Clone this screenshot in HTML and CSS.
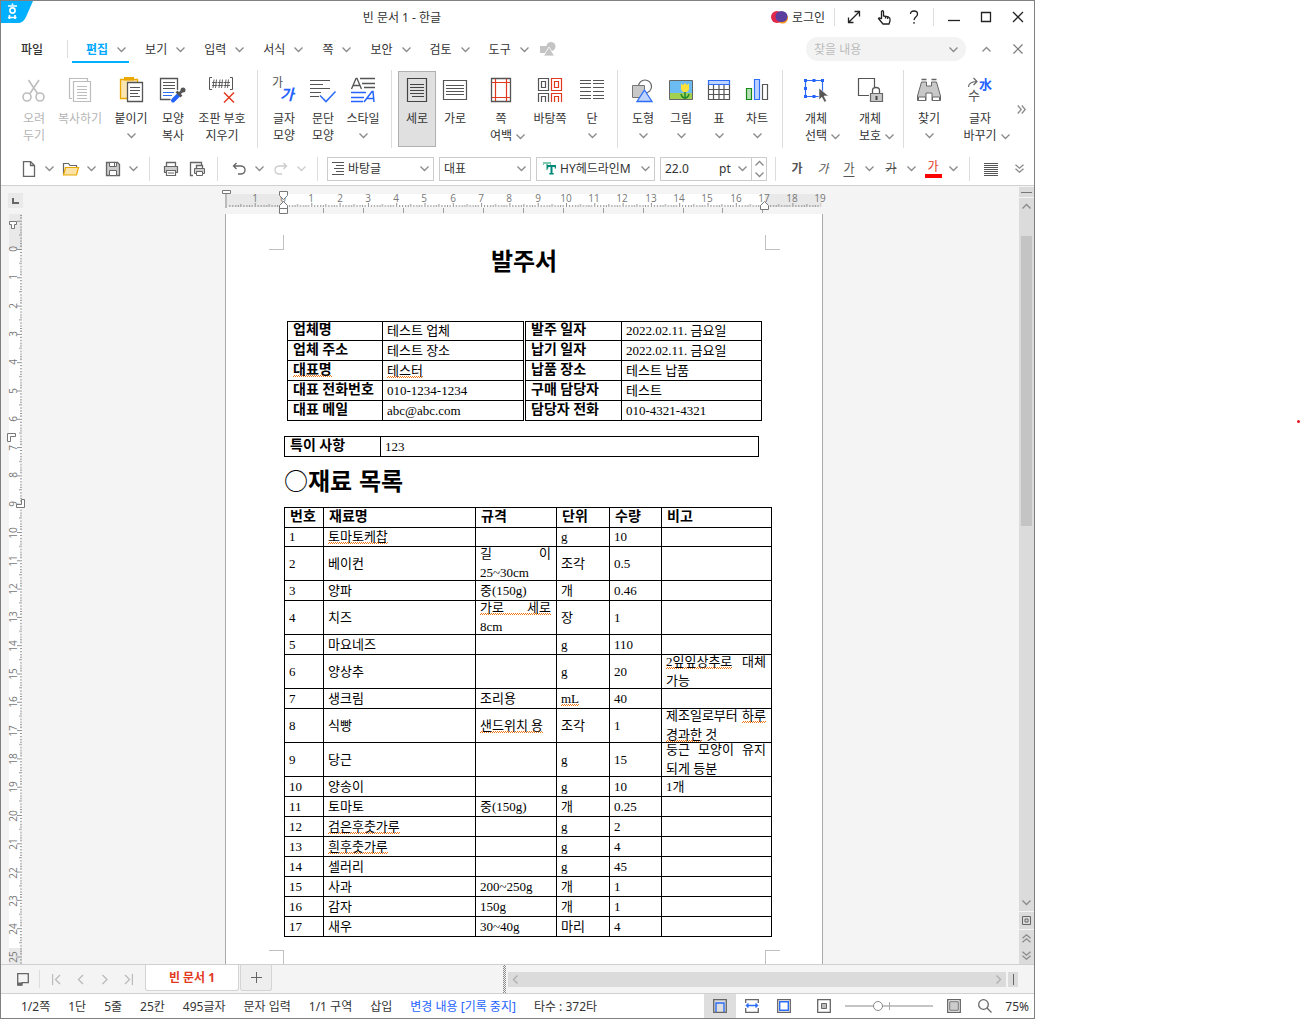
FILE: index.html
```html
<!DOCTYPE html>
<html lang="ko">
<head>
<meta charset="utf-8">
<title>빈 문서 1 - 한글</title>
<link rel="stylesheet" href="styles.css">
</head>
<body>
<svg class="defs" aria-hidden="true">
  <symbol id="chev" viewBox="0 0 9 9"><path d="M.5 2.5l4 4 4-4" fill="none" stroke="currentColor" stroke-width="1.3"/></symbol>
  <symbol id="dchev" viewBox="0 0 9 9"><path d="M.5 .8l4 3.4 4-3.4M.5 4.8l4 3.4 4-3.4" fill="none" stroke="currentColor" stroke-width="1.3"/></symbol>
</svg>

<main class="app">
  <header class="titlebar">
    <svg class="logo" width="32" height="22" viewBox="0 0 32 22"><path d="M0 0h32l-7 16q-3 6-8 6H0z" fill="#00b0ff"/><path d="M7 16.500h8.500M8.500 18v-4M14 18v-4M11.500 4v-1.500M7 5h9" fill="none" stroke="#fff" stroke-width="1.600"/><circle cx="11.500" cy="9.500" r="2.600" fill="none" stroke="#fff" stroke-width="1.600"/></svg>
    <h1 class="title">빈 문서 1 - 한글</h1>
    <button class="login"><svg width="18" height="16" viewBox="0 0 18 16"><circle cx="11.500" cy="9" r="5.500" fill="#f5921e"/><circle cx="6" cy="8" r="6" fill="#e0294a"/><ellipse cx="10.500" cy="7.500" rx="6" ry="5.500" fill="#5b3f9e"/></svg>로그인</button>
    <i class="sep short"></i>
    <button class="win" aria-label="전체 화면"><svg width="14" height="14" viewBox="0 0 14 14"><path d="M2 12L12 2M7.500 1.500h5v5M1.500 7.500v5h5" class="dk"/></svg></button>
    <button class="win" aria-label="터치"><svg width="14" height="16" viewBox="0 0 14 16"><path d="M4.500 10V2.500q1-1.500 2 0V7l5 1q1.500.5 1.500 2v2l-1 3H6L1.500 9.500q.5-1.500 3 .5M8.500 7.500v2M10.700 8v2" class="dk"/></svg></button>
    <button class="win" aria-label="도움말"><svg width="12" height="14" viewBox="0 0 12 14"><path d="M2.500 4Q2.500 1 6 1t3.500 3Q9.500 5.500 8 6.700T6 10M6 12v1.700" class="dk"/></svg></button>
    <i class="sep short"></i>
    <button class="win box" aria-label="최소화"><svg width="12" height="12" viewBox="0 0 12 12"><path d="M0 9.500h12" class="dk"/></svg></button>
    <button class="win box" aria-label="최대화"><svg width="12" height="12" viewBox="0 0 12 12"><path d="M1.500 1.500h9v9h-9z" class="dk"/></svg></button>
    <button class="win box" aria-label="닫기"><svg width="12" height="12" viewBox="0 0 12 12"><path d="M1 1l10 10M11 1L1 11" class="dk"/></svg></button>
  </header>

  <nav class="menubar">
    <button class="file">파일</button>
    <i class="sep short"></i>
    <button class="menu on">편집<svg class="chev"><use href="#chev"/></svg></button>
    <button class="menu">보기<svg class="chev"><use href="#chev"/></svg></button>
    <button class="menu">입력<svg class="chev"><use href="#chev"/></svg></button>
    <button class="menu">서식<svg class="chev"><use href="#chev"/></svg></button>
    <button class="menu">쪽<svg class="chev"><use href="#chev"/></svg></button>
    <button class="menu">보안<svg class="chev"><use href="#chev"/></svg></button>
    <button class="menu">검토<svg class="chev"><use href="#chev"/></svg></button>
    <button class="menu">도구<svg class="chev"><use href="#chev"/></svg></button>
    <svg class="shapes" width="16" height="14" viewBox="0 0 16 14"><path d="M0 4h7v7H0z" fill="#c4c4c4"/><circle cx="11" cy="4.500" r="4.500" fill="#c4c4c4"/><path d="M9 5l5.500 9h-11z" fill="#c4c4c4" stroke="#fff" stroke-width=".8"/></svg>
    <label class="search"><input type="text" placeholder="찾을 내용" aria-label="찾을 내용"><svg class="chev"><use href="#chev"/></svg></label>
    <button class="win box" aria-label="접기"><svg class="chev up"><use href="#chev"/></svg></button>
    <button class="win box" aria-label="문서 닫기"><svg width="10" height="10" viewBox="0 0 10 10"><path d="M.5 .5l9 9M9.500 .5l-9 9" fill="none" stroke="#777" stroke-width="1.200"/></svg></button>
  </nav>

  <section class="ribbon" aria-label="편집 도구">
    <div class="grp g1">
      <button class="cmd off"><svg width="26" height="26" viewBox="0 0 26 26"><g fill="none" stroke="#bdbdbd" stroke-width="1.600"><circle cx="6" cy="20" r="4"/><circle cx="19" cy="20" r="4"/><path d="M7.500 3l9 13.500M18 3L9 16.500"/></g></svg><span>오려<br>두기</span></button>
      <button class="cmd off"><svg width="26" height="26" viewBox="0 0 26 26"><g fill="none" stroke="#bdbdbd" stroke-width="1.200"><path d="M5 21.500H2.500v-20h18V4"/><path d="M6.500 4.500h17v20h-17zM10 9.500h10M10 12.500h10M10 15.500h10M10 18.500h10M10 21.500h10"/></g></svg><span>복사하기</span></button>
      <button class="cmd"><svg width="26" height="26" viewBox="0 0 26 26"><path d="M2.500 2.500h17v19h-17z" fill="#fbe5b0" stroke="#eba900" stroke-width="1.300"/><path d="M6 0h10v3.500H6z" fill="#eba900"/><path d="M9.500 5.500h15v19h-15z" fill="#fff" stroke="#555" stroke-width="1.300"/><path d="M12 10.500h10M12 13.500h10M12 16.500h8M12 19.500h10" stroke="#555"/></svg><span>붙이기</span><svg class="chev"><use href="#chev"/></svg></button>
      <button class="cmd"><svg width="28" height="26" viewBox="0 0 28 26"><path d="M18.500 13V1.500h-17v21h10" fill="none" stroke="#555" stroke-width="1.300"/><path d="M4 5.500h12M4 8.500h12M4 11.500h12" stroke="#555"/><path d="M4 15.500h11M4 18.500h9" stroke="#2e6df6"/><path d="M14 23.500l6-6" stroke="#2563ff" stroke-width="4" stroke-linecap="round"/><path d="M17.500 14.500l5 5M20 17l4-4" stroke="#555" stroke-width="2.500"/><circle cx="24" cy="13" r="2.500" fill="#555"/></svg><span>모양<br>복사</span></button>
      <button class="cmd"><svg width="30" height="26" viewBox="0 0 30 26"><path d="M5 .5H2.500v12H5M23 .5h2.500v12H23" fill="none" stroke="#555"/><path d="M7 2.500L6 11M9.500 2.500l-1 8.500M5 5.500h5.500M5 8.500h5.500M13 2.500L12 11M15.500 2.500l-1 8.500M11 5.500h5.500M11 8.500h5.500M19 2.500L18 11M21.500 2.500l-1 8.500M17 5.500h6M17 8.500h6" fill="none" stroke="#555" stroke-width=".9"/><path d="M17 15.500l10 10M27 15.500l-10 10" stroke="#e03a1e" stroke-width="1.500"/></svg><span>조판 부호<br>지우기</span></button>
    </div>
    <i class="sep"></i>
    <div class="grp g2">
      <button class="cmd"><svg width="26" height="26" viewBox="0 0 26 26"><text x="1" y="10" class="ga">가</text><text x="9" y="23" class="ga blue">가</text></svg><span>글자<br>모양</span></button>
      <button class="cmd"><svg width="26" height="26" viewBox="0 0 26 26"><path d="M0 3.500h20M0 7.500h13M0 11.500h20M0 15.500h11M0 19.500h9" stroke="#555" stroke-width="1.200"/><path d="M10 18.500l6 6 9.500-10" fill="none" stroke="#2e6df6" stroke-width="1.600"/></svg><span>문단<br>모양</span></button>
      <button class="cmd"><svg width="26" height="26" viewBox="0 0 26 26"><path d="M1.500 12L6 1.500h1L11.500 12M3 8.500h7M10 1.500h15M12 6.500h13M14 10.500h11" fill="none" stroke="#555" stroke-width="1.300"/><path d="M1 15.500h15M1 20.500h13M1 24.500h12M14 25l8-10.500h1L24 25M17 21.500h7" fill="none" stroke="#2563ff" stroke-width="1.500"/></svg><span>스타일</span><svg class="chev"><use href="#chev"/></svg></button>
    </div>
    <i class="sep"></i>
    <div class="grp g3">
      <button class="cmd on"><svg width="26" height="26" viewBox="0 0 26 26"><path d="M3.500 1.500h19v23h-19z" fill="#e0e0e0" stroke="#444" stroke-width="1.200"/><path d="M6 7.500h14M6 10.500h14M6 13.500h14M6 16.500h14M8 19.500h12" stroke="#444"/></svg><span>세로</span></button>
      <button class="cmd"><svg width="26" height="26" viewBox="0 0 26 26"><path d="M1.500 3.500h23v19h-23z" fill="none" stroke="#555" stroke-width="1.200"/><path d="M4 8.500h18M4 11.500h18M4 14.500h18M4 17.500h18" stroke="#555"/></svg><span>가로</span></button>
      <button class="cmd"><svg width="26" height="26" viewBox="0 0 26 26"><path d="M3.500 1.500h19v23h-19z" fill="none" stroke="#555" stroke-width="1.300"/><path d="M7.500 2v22M18.500 2v22M4 5.500h18M4 20.500h18" stroke="#e03a1e" stroke-width="1.200"/></svg><span>쪽<br>여백<svg class="chev tail"><use href="#chev"/></svg></span></button>
      <button class="cmd"><svg width="26" height="26" viewBox="0 0 26 26"><g fill="none" stroke="#555" stroke-width="1.200"><path d="M1.500 1.500h10v12h-10zM4.500 4.500h4v6h-4zM1.500 25v-8.500h10V25M4.500 25v-5.500h4V25"/><path stroke="#e03a1e" d="M14.500 1.500h10v12h-10zM17.500 4.500h4v6h-4zM14.500 25v-8.500h10V25M17.500 25v-5.500h4V25"/></g></svg><span>바탕쪽</span></button>
      <button class="cmd"><svg width="26" height="26" viewBox="0 0 26 26"><path d="M1 3.500h11M1 6.500h11M1 10.500h11M1 14.500h11M1 18.500h11M1 21.500h11M14 3.500h11M14 6.500h11M14 10.500h11M14 14.500h11M14 18.500h11M14 21.500h11" stroke="#555" stroke-width="1.100"/></svg><span>단</span><svg class="chev"><use href="#chev"/></svg></button>
    </div>
    <i class="sep"></i>
    <div class="grp g4">
      <button class="cmd"><svg width="26" height="26" viewBox="0 0 26 26"><circle cx="15" cy="9.500" r="6.500" fill="none" stroke="#666" stroke-width="1.200"/><path d="M2.500 8.500h12v12h-12z" fill="#c8c8c8" stroke="#777"/><path d="M14.500 13l7.500 11.500H7z" fill="#bfd3ff" stroke="#2e6df6" stroke-width="1.300"/></svg><span>도형</span><svg class="chev"><use href="#chev"/></svg></button>
      <button class="cmd"><svg width="26" height="26" viewBox="0 0 26 26"><path d="M1.500 3.500h23v19h-23z" fill="#6bbcf2"/><path d="M2 16h22v6H2z" fill="#a3d04e"/><path d="M1.500 3.500h23v19h-23z" fill="none" stroke="#666"/><path d="M13 6.500l2 1.500 2-2 2 2 2-1.500v6l-2 2.500h-4l-2-2.500z" fill="#ffdf3a"/><path d="M17 15v7M13 17q1 4 4 4 3 0 4-4" fill="none" stroke="#1d8a2e" stroke-width="1.500"/></svg><span>그림</span><svg class="chev"><use href="#chev"/></svg></button>
      <button class="cmd"><svg width="26" height="26" viewBox="0 0 26 26"><path d="M2.500 7.500v15h21v-15M7.500 8v14M13 8v14M18 8v14M3 12.500h20M3 17.500h20" fill="none" stroke="#555" stroke-width="1.200"/><path d="M2.500 3.500h21v4h-21z" fill="#bfd3ff" stroke="#2e6df6" stroke-width="1.200"/></svg><span>표</span><svg class="chev"><use href="#chev"/></svg></button>
      <button class="cmd"><svg width="26" height="26" viewBox="0 0 26 26"><path d="M2.500 11.500h5v11h-5z" fill="#b9dfb9" stroke="#168a16" stroke-width="1.200"/><path d="M10.500 2.500h5v20h-5z" fill="#bfd3ff" stroke="#2e6df6" stroke-width="1.200"/><path d="M18.500 7.500h5v15h-5z" fill="none" stroke="#555" stroke-width="1.200"/></svg><span>차트</span><svg class="chev"><use href="#chev"/></svg></button>
    </div>
    <i class="sep"></i>
    <div class="grp g5">
      <button class="cmd"><svg width="26" height="26" viewBox="0 0 26 26"><path d="M2.500 3.500h17v16h-17z" fill="none" stroke="#2e6df6" stroke-width="1.200"/><path d="M1 2h3v3H1zM9.500 2h3v3h-3zM18 2h3v3h-3zM1 10h3v3H1zM1 18h3v3H1zM9.500 18h3v3h-3z" fill="#2563ff"/><path d="M16 11l9.500 8h-4.500l2.500 5-2 1.200-2.700-5-2.800 2.800z" fill="#555" stroke="#fff" stroke-width=".6"/></svg><span>개체<br>선택<svg class="chev tail"><use href="#chev"/></svg></span></button>
      <button class="cmd"><svg width="26" height="26" viewBox="0 0 26 26"><path d="M12 18.500H1.500v-17h16V10" fill="none" stroke="#555" stroke-width="1.200"/><path d="M15.500 16v-2.500q0-3 3.500-3t3.500 3V16" fill="none" stroke="#555" stroke-width="1.300"/><path d="M13.500 16.500h12v8h-12z" fill="#c8c8c8" stroke="#666" stroke-width="1.200"/><path d="M19.500 19v4" stroke="#444" stroke-width="2"/></svg><span>개체<br>보호<svg class="chev tail"><use href="#chev"/></svg></span></button>
    </div>
    <i class="sep"></i>
    <div class="grp g6">
      <button class="cmd"><svg width="26" height="26" viewBox="0 0 26 26"><path d="M5.500 5h5v4h5V5h5l4 14v4.500h-8.500V16h-6v7.500H1.500V19z" fill="#c8c8c8" stroke="#666"/><path d="M5.500 2.500h5M15.500 2.500h5" stroke="#666" stroke-width="1.300"/><path d="M2.500 20h7v3.500h-7zM16.500 20h7v3.500h-7z" fill="#fff" stroke="#666"/></svg><span>찾기</span><svg class="chev"><use href="#chev"/></svg></button>
      <button class="cmd"><svg width="26" height="26" viewBox="0 0 26 26"><path d="M1.500 10q0-5 8-5.500M6.500 1l3.500 3.500L6.500 8" fill="none" stroke="#666" stroke-width="1.200"/><text x="12" y="12" class="ga small blue">水</text><text x="1" y="23" class="ga small">수</text></svg><span>글자<br>바꾸기<svg class="chev tail"><use href="#chev"/></svg></span></button>
    </div>
    <button class="more" aria-label="더 보기"><svg class="chev side"><use href="#dchev"/></svg></button>
  </section>

  <section class="tools" aria-label="서식 도구">
    <div class="split"><button class="ic" aria-label="새 문서"><svg width="16" height="16" viewBox="0 0 16 16"><path d="M2.500 .5h7l4 4v11h-11zM9.500 .5v4h4" class="gr"/></svg></button><button class="dr" aria-label="새 문서 목록"><svg class="chev"><use href="#chev"/></svg></button></div>
    <div class="split"><button class="ic" aria-label="불러오기"><svg width="18" height="16" viewBox="0 0 18 16"><path d="M1.500 13.500v-11h5l1.500 2h6.500V7" fill="none" stroke="#666" stroke-width="1.200"/><path d="M3.500 6.500h13l-2 7.500H1.500z" fill="#fbe3a6" stroke="#eba900" stroke-width="1.200"/></svg></button><button class="dr" aria-label="불러오기 목록"><svg class="chev"><use href="#chev"/></svg></button></div>
    <div class="split"><button class="ic" aria-label="저장"><svg width="16" height="16" viewBox="0 0 16 16"><path d="M1.500 1.500h11l2 2v11h-13z" fill="#ccc" stroke="#666" stroke-width="1.300"/><path d="M4.500 1.500h7v4h-7zM4.500 9.500h7v5h-7z" fill="#fff" stroke="#666"/><path d="M9.500 2v3" stroke="#666"/></svg></button><button class="dr" aria-label="저장 목록"><svg class="chev"><use href="#chev"/></svg></button></div>
    <i class="sep"></i>
    <button class="ic" aria-label="인쇄"><svg width="16" height="16" viewBox="0 0 16 16"><path d="M3.500 5V1.500h9V5" class="gr"/><path d="M1.500 5.500h13v6h-13z" fill="#ccc" stroke="#666" stroke-width="1.200"/><path d="M3.500 9.500h9v5h-9z" fill="#fff" stroke="#666" stroke-width="1.200"/><path d="M5 12h6" stroke="#666"/></svg></button>
    <button class="ic" aria-label="미리 보기"><svg width="16" height="16" viewBox="0 0 16 16"><path d="M4 14.500H1.500v-13h11V4" class="gr"/><path d="M7.500 7V4.500h6V7" class="gr"/><path d="M5.500 7.500h10v5h-10z" fill="#ccc" stroke="#666"/><path d="M7.500 10.500h6v4h-6z" fill="#fff" stroke="#666"/></svg></button>
    <i class="sep"></i>
    <div class="split"><button class="ic" aria-label="되돌리기"><svg width="14" height="14" viewBox="0 0 14 14"><path d="M4.500 1L1.500 4l3 3M1.500 4H9q4 .5 4 4t-4 4H6" class="gr"/></svg></button><button class="dr" aria-label="되돌리기 목록"><svg class="chev"><use href="#chev"/></svg></button></div>
    <div class="split off"><button class="ic" aria-label="다시 실행"><svg width="14" height="14" viewBox="0 0 14 14"><path d="M9.500 1l3 3-3 3M12.500 4H5Q1 4.500 1 8t4 4h3" fill="none" stroke="#ccc" stroke-width="1.300"/></svg></button><button class="dr" aria-label="다시 실행 목록"><svg class="chev"><use href="#chev"/></svg></button></div>
    <i class="sep"></i>
    <div class="fields">
      <label class="field f1"><svg width="12" height="13" viewBox="0 0 12 13"><path d="M0 .5h12M4 3.500h8M2 6.500h10M4 9.500h8M0 12.500h12" stroke="#555"/></svg><select aria-label="스타일"><option>바탕글</option></select><svg class="chev"><use href="#chev"/></svg></label>
      <label class="field f2"><select aria-label="언어"><option>대표</option></select><svg class="chev"><use href="#chev"/></svg></label>
      <label class="field f3"><svg width="13" height="13" viewBox="0 0 13 13"><path d="M0 0h8v3H7V2H5v6H3V2H1v1H0z" fill="#7cc8b0"/><path d="M4 3h9v3.500h-1.300V5H9.500v6h1.200v1.500H6.300V11h1.200V5H5.300v1.500H4z" fill="#00897b"/></svg><select aria-label="글꼴"><option>HY헤드라인M</option></select><svg class="chev"><use href="#chev"/></svg></label>
      <div class="field f4"><input type="text" value="22.0" aria-label="글자 크기"><select aria-label="단위"><option>pt</option></select><svg class="chev"><use href="#chev"/></svg><span class="spin"><button aria-label="크게"><svg class="chev up"><use href="#chev"/></svg></button><button aria-label="작게"><svg class="chev"><use href="#chev"/></svg></button></span></div>
    </div>
    <i class="sep"></i>
    <button class="ic b">가</button>
    <button class="ic i">가</button>
    <div class="split"><button class="ic u">가</button><button class="dr" aria-label="밑줄 목록"><svg class="chev"><use href="#chev"/></svg></button></div>
    <div class="split"><button class="ic s">가</button><button class="dr" aria-label="취소선 목록"><svg class="chev"><use href="#chev"/></svg></button></div>
    <div class="split"><button class="ic c"><span>가</span></button><button class="dr" aria-label="글자 색 목록"><svg class="chev"><use href="#chev"/></svg></button></div>
    <i class="sep"></i>
    <button class="ic" aria-label="양쪽 정렬"><svg width="14" height="14" viewBox="0 0 14 14"><path d="M0 1.500h14M0 3.500h14M0 5.500h14M0 7.500h14M0 9.500h14M0 11.500h14M0 13.500h14" stroke="#555"/></svg></button>
    <button class="ic last" aria-label="더 보기"><svg class="chev"><use href="#dchev"/></svg></button>
  </section>

  <section class="work">
    <div class="vside">
      <div class="corner"><svg width="15" height="15" viewBox="0 0 15 15"><path d="M5 5v5h6" fill="none" stroke="#666" stroke-width="2"/></svg></div>
      <svg class="vruler" width="28" height="751" viewBox="1 214 28 751">
        <defs><pattern id="vt" x="17" y="249" width="5" height="28.3" patternUnits="userSpaceOnUse"><path d="M0 .5h5M3 3.500h2M3 6.500h2M3 9.500h2M3 12h2M2 14.500h3M3 17.500h2M3 20.500h2M3 23h2M3 25.500h2" stroke="#909090"/></pattern></defs>
        <path d="M9 214h13v751H9z" fill="#fff"/><path d="M9 214h13v35H9zM9 948h13v17H9z" fill="#e9e9e9"/>
        <path d="M17 214h5v751h-5z" fill="url(#vt)"/>
        <g class="num">
          <text transform="translate(17 249) rotate(-90)">0</text><text transform="translate(17 277) rotate(-90)">1</text><text transform="translate(17 306) rotate(-90)">2</text><text transform="translate(17 334) rotate(-90)">3</text><text transform="translate(17 362) rotate(-90)">4</text><text transform="translate(17 391) rotate(-90)">5</text><text transform="translate(17 419) rotate(-90)">6</text><text transform="translate(17 448) rotate(-90)">7</text><text transform="translate(17 475) rotate(-90)">8</text><text transform="translate(17 504) rotate(-90)">9</text><text transform="translate(17 533) rotate(-90)">10</text><text transform="translate(17 561) rotate(-90)">11</text><text transform="translate(17 589) rotate(-90)">12</text><text transform="translate(17 617) rotate(-90)">13</text><text transform="translate(17 646) rotate(-90)">14</text><text transform="translate(17 674) rotate(-90)">15</text><text transform="translate(17 702) rotate(-90)">16</text><text transform="translate(17 731) rotate(-90)">17</text><text transform="translate(17 759) rotate(-90)">18</text><text transform="translate(17 787) rotate(-90)">19</text><text transform="translate(17 816) rotate(-90)">20</text><text transform="translate(17 844) rotate(-90)">21</text><text transform="translate(17 873) rotate(-90)">22</text><text transform="translate(17 901) rotate(-90)">23</text><text transform="translate(17 929) rotate(-90)">24</text><text transform="translate(17 957) rotate(-90)">25</text>
        </g>
        <g fill="#fff" stroke="#777"><path d="M9.500 221.500h7v3h-2v4h-3v-4h-2z"/><path d="M7.500 433.500h8v3h-5v5h-3z"/><path d="M24.500 499.500v8h-8v-3h5v-5z"/></g>
      </svg>
    </div>
    <div class="canvas">
      <svg class="hruler" width="598" height="28" viewBox="225 186 598 28">
        <defs><pattern id="ht" x="283" y="203" width="28.3" height="5" patternUnits="userSpaceOnUse"><path d="M.5 0v4M3.500 2v2M6.500 2v2M9.500 2v2M12 2v2M14.500 1v3M17.500 2v2M20.500 2v2M23 2v2M25.500 2v2" stroke="#909090"/></pattern></defs>
        <path d="M225 194h597v13H225z" fill="#fff"/><path d="M225 194h58v13h-58zM765 194h57v13h-57z" fill="#e9e9e9"/>
        <path d="M228 203h593v4H228z" fill="url(#ht)"/>
        <path d="M323.500 208v5M363.500 208v5M403.500 208v5M443.500 208v5M483.500 208v5M523.500 208v5M563.500 208v5M603.500 208v5M643.500 208v5M683.500 208v5M722.500 208v5M762.500 208v5" stroke="#a0a0a0"/>
        <g class="num">
          <text x="255" y="202">1</text><text x="283" y="202">0</text><text x="311" y="202">1</text><text x="340" y="202">2</text><text x="368" y="202">3</text><text x="396" y="202">4</text><text x="424" y="202">5</text><text x="453" y="202">6</text><text x="481" y="202">7</text><text x="509" y="202">8</text><text x="538" y="202">9</text><text x="566" y="202">10</text><text x="594" y="202">11</text><text x="622" y="202">12</text><text x="651" y="202">13</text><text x="679" y="202">14</text><text x="707" y="202">15</text><text x="736" y="202">16</text><text x="764" y="202">17</text><text x="792" y="202">18</text><text x="820" y="202">19</text>
        </g>
        <path d="M226 193v15" stroke="#bbb" stroke-width="2"/>
        <g fill="#fff" stroke="#777"><path d="M222.500 190.500h8v3h-8z"/><path d="M279.500 191.500h8v4l-4 4-4-4z"/><path d="M279.500 208.500v-3l4-4 4 4v3zM279.500 208.500h8v5h-8z"/><path d="M760.500 209.500v-4l4-4 4 4v4z"/></g>
      </svg>
      <article class="page">
        <div class="marks top"><i></i><i></i></div>
        <h2 class="doctitle">발주서</h2>
        <table class="t1">
          <colgroup><col class="w95"><col class="w142"><col class="w97"><col class="w140"></colgroup>
          <tr class="first"><th scope="row">업체명</th><td>테스트 업체</td><th scope="row" class="dbl">발주 일자</th><td>2022.02.11. 금요일</td></tr>
          <tr><th scope="row">업체 주소</th><td>테스트 장소</td><th scope="row" class="dbl">납기 일자</th><td>2022.02.11. 금요일</td></tr>
          <tr><th scope="row"><u>대표명</u></th><td><u>테스터</u></td><th scope="row" class="dbl">납품 장소</th><td>테스트 납품</td></tr>
          <tr><th scope="row">대표 전화번호</th><td>010-1234-1234</td><th scope="row" class="dbl">구매 담당자</th><td>테스트</td></tr>
          <tr><th scope="row">대표 메일</th><td>abc@abc.com</td><th scope="row" class="dbl">담당자 전화</th><td>010-4321-4321</td></tr>
        </table>
        <table class="t2">
          <colgroup><col class="w96"><col></colgroup>
          <tr><th scope="row">특이 사항</th><td>123</td></tr>
        </table>
        <h3 class="dochead"><span>○</span>재료 목록</h3>
        <table class="t3">
          <colgroup><col class="w39"><col class="w152"><col class="w81"><col class="w53"><col class="w52"><col class="w110"></colgroup>
          <thead><tr><th scope="col">번호</th><th scope="col">재료명</th><th scope="col">규격</th><th scope="col">단위</th><th scope="col">수량</th><th scope="col">비고</th></tr></thead>
          <tbody>
          <tr class="first"><td>1</td><td><u>토마토케찹</u></td><td></td><td>g</td><td>10</td><td></td></tr>
          <tr><td>2</td><td>베이컨</td><td><p class="fill">길 이</p><p>25~30cm</p></td><td>조각</td><td>0.5</td><td></td></tr>
          <tr><td>3</td><td>양파</td><td>중(150g)</td><td>개</td><td>0.46</td><td></td></tr>
          <tr><td>4</td><td>치즈</td><td><p class="fill wavy">가로 세로</p><p>8cm</p></td><td>장</td><td>1</td><td></td></tr>
          <tr><td>5</td><td>마요네즈</td><td></td><td>g</td><td>110</td><td></td></tr>
          <tr><td>6</td><td>양상추</td><td></td><td>g</td><td>20</td><td><p class="fill"><u>2잎잎상추로</u> 대체</p><p>가능</p></td></tr>
          <tr><td>7</td><td>생크림</td><td>조리용</td><td><u>mL</u></td><td>40</td><td></td></tr>
          <tr><td>8</td><td>식빵</td><td><u>샌드위치 용</u></td><td>조각</td><td>1</td><td><p class="fill">제조일로부터 <u>하루</u></p><p><u>경과한</u> 것</p></td></tr>
          <tr><td>9</td><td>당근</td><td></td><td>g</td><td>15</td><td><p class="fill">둥근 모양이 유지</p><p>되게 등분</p></td></tr>
          <tr><td>10</td><td>양송이</td><td></td><td>g</td><td>10</td><td>1개</td></tr>
          <tr><td>11</td><td>토마토</td><td>중(150g)</td><td>개</td><td>0.25</td><td></td></tr>
          <tr><td>12</td><td><u>검은후춧가루</u></td><td></td><td>g</td><td>2</td><td></td></tr>
          <tr><td>13</td><td><u>흰후춧가루</u></td><td></td><td>g</td><td>4</td><td></td></tr>
          <tr><td>14</td><td>셀러리</td><td></td><td>g</td><td>45</td><td></td></tr>
          <tr><td>15</td><td>사과</td><td>200~250g</td><td>개</td><td>1</td><td></td></tr>
          <tr><td>16</td><td>감자</td><td>150g</td><td>개</td><td>1</td><td></td></tr>
          <tr><td>17</td><td>새우</td><td>30~40g</td><td>마리</td><td>4</td><td></td></tr>
          </tbody>
        </table>
        <div class="marks bottom"><i></i><i></i></div>
      </article>
    </div>
    <div class="vscroll">
      <button class="vsplit" aria-label="창 나누기"></button>
      <div class="track"><button aria-label="위로"><svg class="chev up"><use href="#chev"/></svg></button><div class="rail"><i class="thumb"></i></div><button aria-label="아래로"><svg class="chev"><use href="#chev"/></svg></button></div>
      <button class="vb" aria-label="개체 선택"><svg width="9" height="9" viewBox="0 0 9 9"><path d="M.5 .5h8v8h-8zM3 3h3v3H3z" fill="none" stroke="#666"/></svg></button>
      <div class="vpair"><button aria-label="이전 쪽"><svg class="chev up"><use href="#dchev"/></svg></button><button aria-label="다음 쪽"><svg class="chev"><use href="#dchev"/></svg></button></div>
    </div>
  </section>

  <section class="tabs">
    <button class="ic" aria-label="문서 목록"><svg width="12" height="13" viewBox="0 0 12 13"><path d="M.7 .7h10.600v9H5v2.500H.7z" fill="none" stroke="#666" stroke-width="1.300"/><path d="M1 9.500h5l-2 3H1z" fill="#666"/></svg></button>
    <i class="sep short"></i>
    <button class="nv" aria-label="처음"><svg width="9" height="11" viewBox="0 0 9 11"><path d="M.5 0v11M8 1L3.500 5.500 8 10" class="lt"/></svg></button>
    <button class="nv" aria-label="이전"><svg width="9" height="11" viewBox="0 0 9 11"><path d="M7 1L2.500 5.500 7 10" class="lt"/></svg></button>
    <button class="nv" aria-label="다음"><svg width="9" height="11" viewBox="0 0 9 11"><path d="M2.500 1L7 5.500 2.500 10" class="lt"/></svg></button>
    <button class="nv" aria-label="마지막"><svg width="9" height="11" viewBox="0 0 9 11"><path d="M8.500 0v11M1 1l4.500 4.500L1 10" class="lt"/></svg></button>
    <button class="tab">빈 문서 1</button>
    <button class="tab add" aria-label="새 탭"><svg width="11" height="11" viewBox="0 0 11 11"><path d="M5.500 0v11M0 5.500h11" fill="none" stroke="#666"/></svg></button>
    <div class="hs"><i class="grip"></i><div class="hbar"><svg width="7" height="9" viewBox="0 0 7 9"><path d="M5.500 .5l-4 4 4 4" class="lt2"/></svg><svg width="7" height="9" viewBox="0 0 7 9"><path d="M1.500 .5l4 4-4 4" class="lt2"/></svg></div><button class="hsplit" aria-label="창 나누기"></button></div>
  </section>

  <footer class="status">
    <span>1/2쪽</span><span>1단</span><span>5줄</span><span>25칸</span><span>495글자</span><span>문자 입력</span><span>1/1 구역</span><span>삽입</span><a href="#">변경 내용 [기록 중지]</a><span>타수 : 372타</span>
    <div class="zoom">
      <button class="on" aria-label="쪽 맞춤"><svg width="14" height="14" viewBox="0 0 14 14"><path d="M.7 .7h12.600v12.600H.7z" class="gr"/><path d="M3 13V4h8v9" class="bl"/></svg></button>
      <button aria-label="폭 맞춤"><svg width="14" height="14" viewBox="0 0 14 14"><path d="M.7 4V.7h12.600V4M.7 9v4.300h12.600V9" class="gr"/><path d="M1.500 6.500h11M3.500 4.500l-2 2 2 2M10.500 4.500l2 2-2 2" class="bl"/></svg></button>
      <button aria-label="100%"><svg width="14" height="14" viewBox="0 0 14 14"><path d="M.7 .7h12.600v12.600H.7z" class="gr"/><path d="M2.700 2.700h8.600v8.600H2.700z" class="bl"/></svg></button>
      <button class="sm" aria-label="축소"><svg width="14" height="14" viewBox="0 0 14 14"><path d="M.7 .7h12.600v12.600H.7z" class="gr"/><path d="M4.500 4.500h5v5h-5z" fill="#bbb" stroke="#666"/></svg></button>
      <input type="range" min="0" max="100" value="36" aria-label="확대 비율">
      <button aria-label="확대"><svg width="14" height="14" viewBox="0 0 14 14"><path d="M.7 .7h12.600v12.600H.7z" class="gr"/><path d="M2.700 2.700h8.600v8.600H2.700z" fill="#ccc" stroke="#777"/></svg></button>
      <button class="mag" aria-label="배율"><svg width="14" height="14" viewBox="0 0 14 14"><circle cx="5.500" cy="5.500" r="4.800" class="gr"/><path d="M9 9l4.500 4.500" class="gr"/></svg></button>
      <output>75%</output>
    </div>
  </footer>
</main>
<aside class="beside"><i class="dot"></i></aside>
</body>
</html>
```
FILE: styles.css
```css
* { box-sizing: border-box; }

body {
  margin: 0;
  display: flex;
  height: 100vh;
  background: #fff;
  color: #333;
  font: 12px/17px "Noto Sans", "Noto Sans CJK KR", sans-serif;
}

button, input, select {
  margin: 0;
  padding: 0;
  border: 0;
  background: none;
  color: inherit;
  font: inherit;
  border-radius: 0;
}
button { display: flex; align-items: center; justify-content: center; }
select { appearance: none; outline: 0; }
svg { flex: none; display: block; }
p, h1, h2, h3 { margin: 0; font: inherit; }

.defs { position: absolute; width: 0; height: 0; }
.chev { width: 9px; height: 9px; color: #8a8a8a; }
.up { transform: rotate(180deg); }
.side { transform: rotate(-90deg); }
.dk { fill: none; stroke: #222; stroke-width: 1.3; }
.gr { fill: none; stroke: #666; stroke-width: 1.3; }
.lt { fill: none; stroke: #bbb; stroke-width: 1.4; }
.lt2 { fill: none; stroke: #b0b0b0; stroke-width: 1.4; }
.bl { fill: none; stroke: #2e6df6; stroke-width: 1.4; }
.sep { flex: none; width: 1px; align-self: stretch; background: #ddd; }
.sep.short { height: 18px; align-self: center; }

.app {
  flex: 1;
  min-width: 0;
  display: flex;
  flex-direction: column;
  border: 1px solid #808080;
}
.beside { flex: none; width: 266px; }
.dot {
  display: block;
  width: 3px;
  height: 3px;
  margin: 420px 1px 0 auto;
  border-radius: 2px;
  background: #e81123;
}

/* title bar */
.titlebar { flex: none; display: flex; align-items: center; height: 32px; }
.logo { align-self: flex-start; }
.title { flex: 1; text-align: center; }
.login { gap: 3px; margin-right: 9px; }
.win { width: 30px; height: 24px; }
.win.box { width: 32px; }
.titlebar .sep + .win { margin-left: 4px; }
.titlebar .win + .sep { margin-left: 4px; }

/* menu bar */
.menubar { flex: none; display: flex; align-items: center; height: 32px; }
.file { width: 62px; font-weight: 500; margin-right: 4px; }
.menubar > .sep { margin-right: 4px; }
.menu { gap: 9px; height: 28px; padding: 2px 3px 0 14px; margin-right: 2px; border-bottom: 2px solid transparent; }
.menu.on { color: #00a8ff; font-weight: 700; border-color: #00b0ff; }
.shapes { margin-left: 6px; }
.search {
  display: flex;
  align-items: center;
  width: 160px;
  height: 24px;
  margin-left: auto;
  margin-right: 4px;
  padding: 0 8px;
  border-radius: 12px;
  background: #f3f3f3;
}
.search input { flex: 1; min-width: 0; }
.search input::placeholder { color: #bbb; opacity: 1; }

/* ribbon */
.ribbon { flex: none; display: flex; height: 87px; padding: 5px 0 4px; }
.ribbon > .sep { height: 78px; }
.grp { display: grid; height: 76px; margin-top: 1px; }
.g1 { grid-template-columns: 44px 48px 54px 30px 68px; padding-left: 11px; margin-right: 1px; }
.g2 { grid-template-columns: 44px 34px 46px; padding: 0 4px; margin-right: 1px; }
.g3 { grid-template-columns: 38px 38px 54px 44px 40px; padding: 0 5px 0 6px; }
.g4 { grid-template-columns: repeat(4, 38px); padding: 0 6px; }
.g5 { grid-template-columns: 54px 54px; padding: 0 6px; }
.g6 { grid-template-columns: 38px 64px; padding-left: 6px; }
.cmd {
  flex-direction: column;
  justify-content: flex-start;
  padding-top: 5px;
  border: 1px solid transparent;
  white-space: nowrap;
}
.cmd > svg:first-child { margin-bottom: 7px; overflow: visible; }
.cmd > .chev { margin-top: 4px; }
.cmd.on { background: #e0e0e0; border-color: #b0b0b0; }
.cmd.off { color: #b5b5b5; }
.tail { display: inline-block; margin: 0 -13px 0 4px; vertical-align: middle; }
.ga { font-size: 12px; fill: #555; }
.ga.blue { font-size: 15px; font-style: italic; font-weight: 700; fill: #2563ff; }
.ga.small { font-size: 13px; font-style: normal; }
.more { width: 24px; margin-left: auto; margin-right: 4px; }

/* formatting row */
.tools {
  flex: none;
  display: flex;
  align-items: center;
  gap: 2px;
  height: 34px;
  padding: 0 3px 0 16px;
  border-bottom: 1px solid #d0d0d0;
}
.tools > .sep { height: 24px; align-self: center; margin: 0 7px 0 6px; }
.split { display: flex; }
.split.off .chev { color: #ccc; }
.ic { width: 24px; height: 24px; }
.dr { width: 16px; height: 24px; }
.last { margin-left: auto; }
.fields { display: flex; gap: 5px; }
.field {
  display: flex;
  align-items: center;
  gap: 4px;
  height: 24px;
  padding: 0 4px;
  border: 1px solid #ccc;
}
.field select, .field input { flex: 1; min-width: 0; }
.f1 { width: 107px; }
.f2 { width: 92px; }
.f3 { width: 119px; padding-left: 6px; }
.f4 { width: 107px; padding-right: 0; }
.field.f4 select { flex: none; width: 15px; }
.spin { display: flex; flex-direction: column; border-left: 1px solid #ccc; }
.spin button { width: 14px; height: 11px; }
.b { font-weight: 700; color: #555; }
.i { font-style: italic; color: #555; }
.u { text-decoration: underline; text-underline-offset: 3px; color: #555; }
.s { text-decoration: line-through; color: #555; }
.c span { width: 17px; line-height: 14px; color: #e03a1e; border-bottom: 4px solid #f00; }

/* workspace */
.work {
  flex: 1;
  min-height: 0;
  display: grid;
  grid-template-columns: 28px minmax(0, 1fr) 15px;
  background: #f4f4f4;
  overflow: hidden;
}
.vside { display: flex; flex-direction: column; min-height: 0; overflow: hidden; }
.corner { flex: none; width: 15px; height: 15px; margin: 7px 0 6px 7px; background: #e9e9e9; }
.vruler { flex: none; }
.num { font-size: 10px; fill: #777; text-anchor: middle; font-family: "Open Sans", sans-serif; }
.canvas { min-height: 0; display: flex; flex-direction: column; align-items: center; overflow: hidden; }
.hruler { overflow: visible; }

.page {
  flex: 1 0 auto;
  width: 598px;
  border: solid #aaa;
  border-width: 0 1px;
  background: #fff;
  color: #000;
  font: 13px/14px "Liberation Serif", "Noto Sans CJK KR", serif;
}
.marks { display: flex; justify-content: space-between; margin: 0 42px 0 43px; }
.marks i { width: 15px; height: 15px; border: 0 solid #c0c0c0; }
.marks i:first-child { border-right-width: 1px; }
.marks i:last-child { border-left-width: 1px; }
.marks.top { margin-top: 21px; }
.marks.top i { border-bottom-width: 1px; }
.marks.bottom { margin-top: 13px; }
.marks.bottom i { border-top-width: 1px; }
.doctitle, .dochead { font: 700 24px/20px "Noto Sans CJK KR", sans-serif; }
.doctitle { text-align: center; }
.dochead { margin: 13px 0 17px 58px; }
.dochead span { font-weight: 400; }

table { border-collapse: collapse; table-layout: fixed; margin-left: 58px; }
.t1 { width: 475px; margin: 51px 0 15px 61px; }
.t2 { width: 475px; }
.t3 { width: 488px; }
.w39 { width: 39px; }
.w52 { width: 52px; }
.w53 { width: 53px; }
.w81 { width: 81px; }
.w95 { width: 95px; }
.w96 { width: 96px; }
.w97 { width: 97px; }
.w110 { width: 110px; }
.w140 { width: 140px; }
.w142 { width: 142px; }
.w152 { width: 152px; }
th, td { height: 20px; padding: 0 5px 0 4px; border: 1px solid #000; text-align: left; white-space: nowrap; }
th { font-size: 14px; padding: 0 0 2px 5px; font-weight: 700; }
.first th, .first td { height: 19px; }
.dbl { border-left: 3px double #000; }
td p + p { margin-top: 5px; }
.fill { text-align: justify; text-align-last: justify; }
u, .wavy {
  text-decoration: none;
  background:
    linear-gradient(90deg, #f07818 50%, transparent 50%) 0 100% / 2px 1px repeat-x,
    linear-gradient(90deg, transparent 50%, #f07818 50%) 0 calc(100% - 1px) / 2px 1px repeat-x;
}

.vscroll { display: flex; flex-direction: column; gap: 1px; min-height: 0; padding-top: 1px; }
.vscroll button { width: 15px; height: 17px; }
.vscroll .vsplit { flex: none; height: 10px; background: linear-gradient(#777, #777) center / 11px 1px no-repeat #dbdbdb; }
.track { flex: 1; min-height: 0; display: flex; flex-direction: column; background: #dbdbdb; }
.rail { flex: 1; padding: 21px 2px 0; }
.thumb { display: block; height: 44%; background: #c4c4c4; }
.vb { background: #dbdbdb; }
.vpair { background: #dbdbdb; }

/* document tabs */
.tabs { flex: none; display: flex; align-items: center; height: 29px; padding: 0 16px 0 10px; border-top: 1px solid #d0d0d0; background: #f4f4f4; }
.tabs > .sep { margin: 0 4px; }
.nv { width: 24px; height: 24px; }
.tab {
  align-self: flex-start;
  width: 94px;
  height: 26px;
  margin-left: 5px;
  border: 1px solid #d4d4d4;
  border-top: 0;
  border-radius: 0 0 3px 3px;
  background: #fff;
  color: #e03a1e;
  font-weight: 700;
}
.tab.add { width: 32px; margin-left: 1px; background: #eee; }
.hs { width: 515px; margin-left: auto; display: flex; align-items: center; gap: 2px; }
.grip { width: 3px; height: 28px; background: repeating-conic-gradient(#888 0 25%, transparent 0 50%) 0 0 / 2px 2px; }
.hbar { flex: 1; display: flex; align-items: center; justify-content: space-between; height: 15px; padding: 0 4px; background: #dbdbdb; }
.hsplit { width: 10px; height: 15px; background: linear-gradient(#666, #666) center / 1px 11px no-repeat #dbdbdb; }

/* status bar */
.status { flex: none; display: flex; align-items: center; gap: 18px; height: 25px; padding: 0 5px 0 20px; border-top: 1px solid #d0d0d0; white-space: nowrap; }
.status a { color: #2563ff; text-decoration: none; }
.zoom { display: flex; align-items: center; margin-left: auto; }
.zoom button { width: 32px; height: 24px; }
.zoom .on { background: #dedede; }
.zoom .sm { margin-left: 8px; }
.zoom .mag { width: 30px; margin-right: 5px; }
.zoom input {
  appearance: none;
  width: 88px;
  height: 12px;
  margin: 0 5px;
  background: linear-gradient(#aaa, #aaa) 50% 50% / 1px 8px no-repeat, linear-gradient(#c4c4c4, #c4c4c4) 0 50% / 100% 2px no-repeat;
}
.zoom input::-webkit-slider-thumb {
  appearance: none;
  width: 10px;
  height: 10px;
  border: 1px solid #888;
  border-radius: 5px;
  background: #fff;
}
```
